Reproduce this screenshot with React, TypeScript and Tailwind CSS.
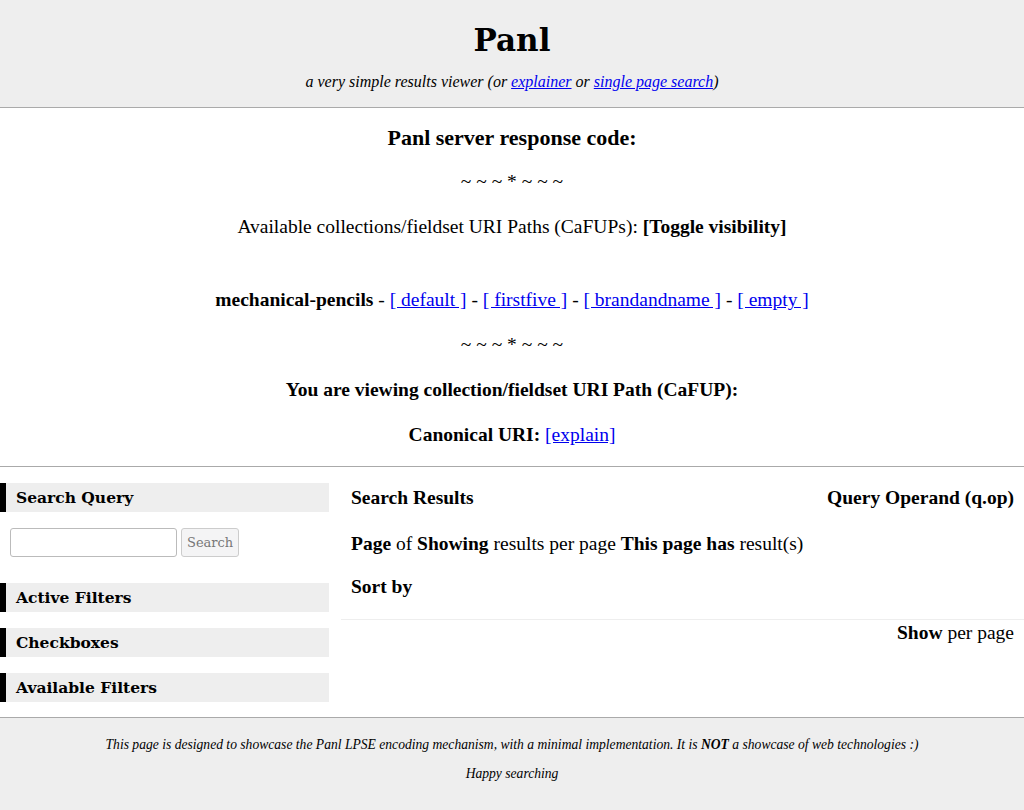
export default function App() {
  const body = { fontFamily: '"Liberation Serif", serif' };
  const head = { fontFamily: '"DejaVu Serif", serif' };
  const sideHeads = ['Active Filters', 'Checkboxes', 'Available Filters'];

  return (
    <div className="min-h-[810px] bg-white text-black" style={body}>
      <header className="bg-[#eeeeee] border-b border-[#aaaaaa] h-[108px] flex flex-col items-center pt-[20px]">
        <h1 className="text-[31px] font-bold leading-[40px]" style={head}>Panl</h1>
        <p className="italic text-[16px] mt-[10px]">
          a very simple results viewer (or <a href="#" className="text-[#0000ee] underline">explainer</a> or{' '}
          <a href="#" className="text-[#0000ee] underline">single page search</a>)
        </p>
      </header>

      <section className="border-b border-[#aaaaaa] h-[359px] flex flex-col items-center text-[19.5px] pt-[18px]">
        <h2 className="font-bold text-[22px] leading-[24px]">Panl server response code:</h2>
        <p className="mt-[20px] leading-[24px]">~ ~ ~ * ~ ~ ~</p>
        <p className="mt-[21px] leading-[24px]">
          Available collections/fieldset URI Paths (CaFUPs): <b>[Toggle visibility]</b>
        </p>
        <p className="mt-[49px] leading-[24px]">
          <b>mechanical-pencils</b> - <a href="#" className="text-[#0000ee] underline">[ default ]</a> -{' '}
          <a href="#" className="text-[#0000ee] underline">[ firstfive ]</a> -{' '}
          <a href="#" className="text-[#0000ee] underline">[ brandandname ]</a> -{' '}
          <a href="#" className="text-[#0000ee] underline">[ empty ]</a>
        </p>
        <p className="mt-[21px] leading-[24px]">~ ~ ~ * ~ ~ ~</p>
        <p className="mt-[21px] leading-[24px] font-bold">You are viewing collection/fieldset URI Path (CaFUP):</p>
        <p className="mt-[21px] leading-[24px]">
          <b>Canonical URI:</b> <a href="#" className="text-[#0000ee] underline">[explain]</a>
        </p>
      </section>

      <main className="flex h-[250px]">
        <aside className="w-[329px] pt-[16px]">
          <h3 className="bg-[#eeeeee] border-l-[6px] border-black h-[29px] pl-[10px] text-[15.5px] font-bold leading-[29px]" style={head}>
            Search Query
          </h3>
          <div className="flex items-center gap-[4px] pl-[10px] mt-[16px]">
            <input className="w-[167px] h-[29px] border border-[#bbbbbb] rounded-[3px] bg-white" />
            <button className="h-[29px] px-[5px] border border-[#cccccc] rounded-[3px] bg-[#f4f4f5] text-[#777777] text-[13px]" style={head}>
              Search
            </button>
          </div>
          <div className="flex flex-col gap-[16px] mt-[26px]">
            {sideHeads.map((t) => (
              <h3 key={t} className="bg-[#eeeeee] border-l-[6px] border-black h-[29px] pl-[10px] text-[15.5px] font-bold leading-[29px]" style={head}>
                {t}
              </h3>
            ))}
          </div>
        </aside>
        <div className="flex-1 ml-[12px] text-[19.5px] pt-[16px]">
          <div className="flex justify-between pl-[10px] pr-[10px] leading-[29px] font-bold">
            <span>Search Results</span>
            <span>Query Operand (q.op)</span>
          </div>
          <p className="pl-[10px] mt-[20px] leading-[24px]">
            <b>Page</b> of <b>Showing</b> results per page <b>This page has</b> result(s)
          </p>
          <p className="pl-[10px] mt-[19px] leading-[24px] font-bold">Sort by</p>
          <div className="border-t border-[#eeeeee] mt-[20px] pr-[10px] text-right leading-[24px] pt-[1px]">
            <b>Show</b> per page
          </div>
        </div>
      </main>

      <footer className="bg-[#eeeeee] border-t border-[#aaaaaa] h-[93px] flex flex-col items-center italic text-[13.6px] pt-[18px]">
        <p className="leading-[18px]">
          This page is designed to showcase the Panl LPSE encoding mechanism, with a minimal implementation. It is <b>NOT</b> a showcase of web technologies :)
        </p>
        <p className="leading-[18px] mt-[11px]">Happy searching</p>
      </footer>
    </div>
  );
}
